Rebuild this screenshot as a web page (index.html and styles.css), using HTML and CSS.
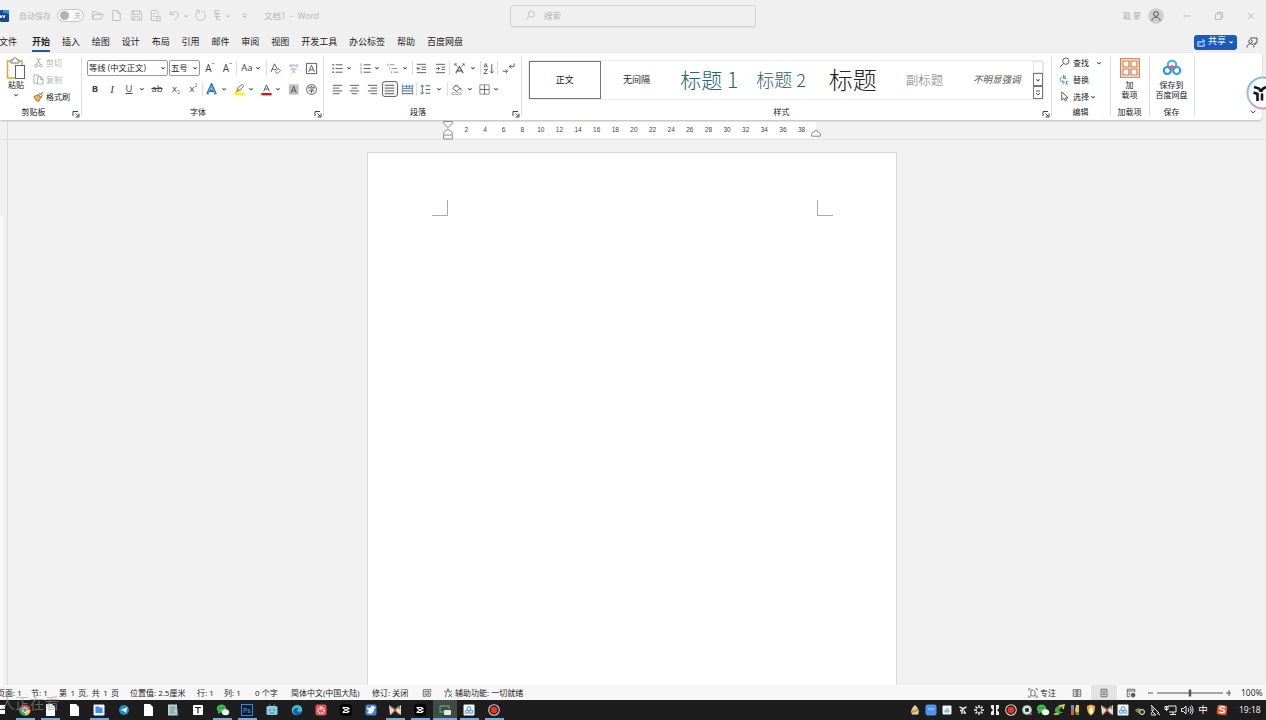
FILE: index.html
```html
<!DOCTYPE html>
<html lang="zh-CN">
<head>
    <meta charset="UTF-8">
    <title>文档1 - Word</title>
    <link rel="stylesheet" href="styles.css">
</head>
<body>
<svg class="defs">
    <symbol id="caret" viewBox="0 0 6 6"><path d="M1.300 2.300L3 3.800l1.700-1.500" fill="none" stroke="currentColor" stroke-width="1.1"/></symbol>
    <symbol id="launcher" viewBox="0 0 8 8"><path d="M1 6V1.500h5M3.500 3.500l3 3M7 3.500V7H3.500" fill="none" stroke="#444" stroke-width="1"/></symbol>
    <symbol id="doc" viewBox="0 0 16 16"><path d="M4 2h6l3 3v9H4z" fill="#fff"/></symbol>
    <symbol id="capcut" viewBox="0 0 16 16"><rect x="2" y="2" width="12" height="12" rx="3" fill="#000"/><path d="M4.500 5.500h5l2 1.500M4.500 10.500h5l2-1.500M5 6l6 4M5 10l6-4" fill="none" stroke="#fff" stroke-width="1.200"/></symbol>
    <symbol id="butterfly" viewBox="0 0 16 16"><path d="M2 3l6 4 6-4v10l-6-4-5 4z" fill="#e8dccb"/><path d="M3 4l5 4-4 5M13 4L8 8l4 5" fill="none" stroke="#a64b42" stroke-width="1"/><path d="M11 4l2 3" stroke="#55a05a" stroke-width="1.500"/></symbol>
    <symbol id="wechat" viewBox="0 0 16 16"><ellipse cx="6.500" cy="6.500" rx="4.700" ry="4" fill="#3fb954"/><path d="M3 9l0 3 3-2z" fill="#3fb954"/><ellipse cx="10.500" cy="10.300" rx="3.700" ry="3" fill="#f1f5f1"/><circle cx="5" cy="6" r=".7" fill="#185425"/><circle cx="8" cy="6" r=".7" fill="#185425"/></symbol>
    <symbol id="netdisk" viewBox="0 0 16 16"><rect x="2.500" y="2.500" width="11" height="11" rx="1" fill="#f2f7fd"/><g fill="none" stroke="#6aa9da" stroke-width="1.200"><circle cx="8" cy="6.700" r="1.800"/><circle cx="5.900" cy="9.700" r="1.600"/><circle cx="10.100" cy="9.700" r="1.600"/></g></symbol>
    <symbol id="rec" viewBox="0 0 16 16"><circle cx="8" cy="8" r="5.300" fill="#222" stroke="#d9d0ca" stroke-width="1.100"/><circle cx="8" cy="8" r="3.300" fill="#ee3328"/></symbol>
    <symbol id="knot" viewBox="0 0 16 16"><path d="M4 3h3v10H4v-3l2-2-2-2zM12 3H9v10h3v-3l-2-2 2-2z" fill="currentColor"/></symbol>
</svg>

<header class="titlebar">
    <svg class="word-logo" viewBox="0 0 9 12"><rect width="9" height="12" rx="1" fill="#174a9a"/><path d="M3 0h6v4H3z" fill="#3a8fdc"/><rect y="3" width="7" height="7" fill="#164491"/><path d="M0 5l1 3 1.500-3L4 8l1-3" fill="none" stroke="#fff"/></svg>
    <span class="autosave">自动保存</span>
    <span class="toggle"><i></i><b>关</b></span>
    <div class="quick">
        <svg viewBox="0 0 14 14"><path d="M1.500 11V3h4l1 1.500h4V6M1.500 11l2-5H13l-2 5z"/></svg>
        <svg viewBox="0 0 14 14"><path d="M3 1.500h5l3 3v8H3zM8 1.500v3h3"/></svg>
        <svg viewBox="0 0 14 14"><path d="M2 2h9l1.500 1.500V12H2zM4 2v4h6V2M4 12V8.500h6V12"/></svg>
        <svg viewBox="0 0 14 14"><path d="M7 12.500H2.500v-11h5l2.500 3V6M4 5h3M4 8h3M8 8h4v5H8zM9 10h2"/></svg>
        <svg viewBox="0 0 14 14"><path d="M2.500 2v4h4M2.500 6C5 2 11 2 11 6.500c0 2-2 4-4.500 5.500"/></svg>
        <svg class="caret"><use href="#caret"/></svg>
        <svg viewBox="0 0 14 14"><path d="M2 1.500h3.500V5M5 2C1 4 1 10 5 12c4 1.500 8-2 7-6-.5-2-2-3.500-4-4"/></svg>
        <svg viewBox="0 0 14 14"><path d="M3 2h6M5 2v3h5M8 5l-4 3h6M5 8l5 5M6 8v4M3 5h3"/></svg>
        <svg class="caret"><use href="#caret"/></svg>
        <svg viewBox="0 0 14 14"><path d="M4.500 5.500h5M5.500 8L7 9.500 8.500 8z"/></svg>
    </div>
    <span class="doc-title">文档1&nbsp; -&nbsp; Word</span>
    <div class="search">
        <svg viewBox="0 0 12 12"><circle cx="7" cy="4.500" r="3.300"/><path d="M4.500 7L1 10.500"/></svg>
        <span>搜索</span>
    </div>
    <span class="user">戢 蓼</span>
    <svg class="avatar" viewBox="0 0 16 16"><circle class="disc" cx="8" cy="8" r="7.800"/><circle cx="8" cy="6" r="2.400"/><path d="M3.800 13c.5-5 7.900-5 8.400 0"/></svg>
    <div class="window-buttons">
        <svg viewBox="0 0 12 12"><path d="M2.500 6h7"/></svg>
        <svg viewBox="0 0 12 12"><path d="M2.500 4h5.500v5.500H2.500zM4.500 4V2.500h5V8H8"/></svg>
        <svg viewBox="0 0 12 12"><path d="M3 3l6 6M9 3L3 9"/></svg>
    </div>
</header>

<nav class="tabs">
    <span>文件</span><span class="active">开始</span><span>插入</span><span>绘图</span><span>设计</span><span>布局</span><span>引用</span><span>邮件</span><span>审阅</span><span>视图</span><span>开发工具</span><span>办公标签</span><span>帮助</span><span>百度网盘</span>
    <div class="share">
        <svg viewBox="0 0 10 10"><path d="M3 4H1v5h7V6M3 6.500C3 4 5 3.500 8 3.500M6 1.500l2.500 2L6 5.500"/></svg>
        <span>共享</span>
        <svg class="caret"><use href="#caret"/></svg>
    </div>
    <svg class="comment" viewBox="0 0 12 12"><path d="M4 2h7v5H9v2L7.500 7.500"/><circle cx="4.500" cy="5.500" r="1.800"/><path d="M1 11.500c0-5 7-5 7 0"/></svg>
</nav>

<section class="ribbon">
    <div class="group clipboard">
        <div class="body">
            <div class="paste">
                <svg viewBox="0 0 20 24"><path d="M5 4H1.500v17H9M12 4h4v4" fill="none" stroke="#dfa339" stroke-width="1.500"/><path d="M5 6V3h2c0-3 4-3 4 0h2v3z" fill="#fff" stroke="#777"/><path d="M9.500 8.500h9v13h-9z" fill="#fff" stroke="#666" stroke-width="1.100"/></svg>
                <span>粘贴</span>
                <svg class="caret"><use href="#caret"/></svg>
            </div>
            <div class="stack">
                <div class="off"><svg viewBox="0 0 12 12"><path d="M4 1l4 7M8 1L4 8"/><circle cx="3.500" cy="9.500" r="1.500"/><circle cx="8.500" cy="9.500" r="1.500"/></svg>剪切</div>
                <div class="off"><svg viewBox="0 0 12 12"><path d="M5 10H1V1h5v2M5 3h3.500L11 5.500V11H5zM8 3v3h3"/></svg>复制</div>
                <div><svg viewBox="0 0 12 12"><path d="M1 6l5-2 2.500 3L6 11.500C4 11 2 9 1 6z" fill="#efb55b" stroke="#b5711b"/><path d="M6 4l1.500-1.500L10 5 8.500 7zM9 3.500l2-2.500" fill="#fff" stroke="#555"/></svg>格式刷</div>
            </div>
        </div>
        <div class="label"><span>剪贴板</span><svg><use href="#launcher"/></svg></div>
    </div>

    <div class="group font">
        <div class="row font-top">
            <div class="combo"><span>等线 (中文正文)</span><svg class="caret"><use href="#caret"/></svg></div>
            <div class="combo"><span>五号</span><svg class="caret"><use href="#caret"/></svg></div>
            <div class="cell grow">A<sup>ˆ</sup></div>
            <div class="cell grow">A<sup>ˇ</sup></div>
            <div class="cell sep">Aa<svg class="caret"><use href="#caret"/></svg></div>
            <div class="cell sep"><svg viewBox="0 0 14 14"><path d="M2 11L6 2l3 6M3.500 8h4"/><path d="M7 10l3-3 2.500 2-3 3H8z" stroke="#b05b9f"/></svg></div>
            <div class="cell"><svg viewBox="0 0 14 14"><path d="M3 3h2v2H3zM6 5V3h2v2M9.500 3h2v2h-2z" stroke="#8a9fb3" stroke-width=".7"/><path d="M3.500 7.500h7M7 6.500v1M5 8l4 4M9 8l-4 4" stroke="#999" stroke-width=".8"/></svg></div>
            <div class="cell"><svg viewBox="0 0 14 14"><path d="M1.500 1.500h11v11h-11zM4 10.500L7 3.500l3 7M5 8.500h4"/></svg></div>
        </div>
        <div class="row font-bottom">
            <div class="cell"><b>B</b></div>
            <div class="cell serif"><i>I</i></div>
            <div class="cell"><u>U</u></div>
            <div class="cell drop pad"><svg class="caret"><use href="#caret"/></svg></div>
            <div class="cell"><s>ab</s></div>
            <div class="cell script">x<sub>2</sub></div>
            <div class="cell script">x<sup>2</sup></div>
            <div class="cell sep"><svg viewBox="0 0 14 14"><path d="M2.500 12L7 2l4.500 10M4.500 8.500h5" stroke="#2472b5" stroke-width="2.600"/><path d="M3 12L7 3l4 9" stroke="#a9d4f2" stroke-width=".7"/></svg></div>
            <div class="cell drop"><svg class="caret"><use href="#caret"/></svg></div>
            <div class="cell"><svg viewBox="0 0 14 14"><path d="M1.500 11.700h11" stroke="#fbef1c" stroke-width="2.700"/><path d="M4 9l1.500-4L10 1.500 11.500 3 8 7.500z" fill="#fff" stroke="#666"/><path d="M3 10l3-4 1.500 2z" stroke="#d0a21d"/></svg></div>
            <div class="cell drop"><svg class="caret"><use href="#caret"/></svg></div>
            <div class="cell"><svg viewBox="0 0 14 14"><path d="M1.500 12h11" stroke="#d0151e" stroke-width="2.600"/><path d="M4 9l3-7 3 7M5 6.500h4"/></svg></div>
            <div class="cell drop"><svg class="caret"><use href="#caret"/></svg></div>
            <div class="cell"><svg viewBox="0 0 14 14"><path d="M2 1.500h10.500v11H2z" fill="#bfbfbf" stroke="none"/><path d="M4.500 10.500l2.700-7 2.700 7M5.500 8.300h3.500"/></svg></div>
            <div class="cell"><svg viewBox="0 0 14 14"><circle cx="7" cy="7" r="5.300"/><path d="M7 3v1M4 6V4.500h6V6M5 6.500h4L7 8M4 8.500h6M7 8v3"/></svg></div>
        </div>
        <div class="label"><span>字体</span><svg><use href="#launcher"/></svg></div>
    </div>

    <div class="group para">
        <div class="row para-top">
            <div class="cell"><svg viewBox="0 0 14 14"><path d="M5 3h7.500M5 7h7.500M5 11h7.500"/><path d="M1.500 3h1.700M1.500 7h1.700M1.500 11h1.700" stroke="#2f6fa8" stroke-width="1.700"/></svg></div>
            <div class="cell drop"><svg class="caret"><use href="#caret"/></svg></div>
            <div class="cell"><svg viewBox="0 0 14 14"><path d="M5 3h7.500M5 7h7.500M5 11h7.500"/><path d="M2 1.500v3M1.500 6h1v2h-1M1.500 10h1v2h-1" stroke="#669ac5" stroke-width=".8"/></svg></div>
            <div class="cell drop"><svg class="caret"><use href="#caret"/></svg></div>
            <div class="cell"><svg viewBox="0 0 14 14"><path d="M4 3h5M6 7h6M8 11h5" stroke="#888"/><path d="M2 2v2M4 6v2M6 10v2" stroke="#669ac5"/></svg></div>
            <div class="cell drop"><svg class="caret"><use href="#caret"/></svg></div>
            <div class="cell sep"><svg viewBox="0 0 14 14"><path d="M2 2.500h10M7 5.500h5M7 8h5M2 11.500h10"/><path d="M6 7H2m2-2L2 7l2 2" stroke="#3276b0"/></svg></div>
            <div class="cell"><svg viewBox="0 0 14 14"><path d="M2 2.500h10M8 5.500h4M8 8h4M2 11.500h10"/><path d="M2 7h4M4 5l2 2-2 2" stroke="#3276b0"/></svg></div>
            <div class="cell sep"><svg viewBox="0 0 14 14"><path d="M3 12l4-7 4 7M5 9.500h4" stroke-width="1.200"/><path d="M2 2l3 3M12 2L9 5M2 4V2h2M12 4V2h-2" stroke="#3d78a6"/></svg></div>
            <div class="cell drop"><svg class="caret"><use href="#caret"/></svg></div>
            <div class="cell sep"><svg viewBox="0 0 14 14"><path d="M2 6l2-4.500L6 6M3 4.500h2" stroke="#2f6fa8"/><path d="M2 8h4l-4 4.500h4M10.500 2v10M8.500 10l2 2 2-2"/></svg></div>
            <div class="cell sep"><svg viewBox="0 0 14 14"><path d="M13 1.500V5H8m2-2L8 5l2 2M1 10h5M4 8l2 2-2 2"/></svg></div>
        </div>
        <div class="row para-bottom">
            <div class="cell"><svg viewBox="0 0 14 14"><path d="M2 2.500h10M2 5.500h7M2 8.500h10M2 11.500h7"/></svg></div>
            <div class="cell"><svg viewBox="0 0 14 14"><path d="M2 2.500h10M4 5.500h6M2 8.500h10M4 11.500h6"/></svg></div>
            <div class="cell"><svg viewBox="0 0 14 14"><path d="M2 2.500h10M5 5.500h7M2 8.500h10M5 11.500h7"/></svg></div>
            <div class="cell"><div class="pressed"><svg viewBox="0 0 14 14"><path d="M2 2.500h10M2 5.500h10M2 8.500h10M2 11.500h10"/></svg></div></div>
            <div class="cell"><svg viewBox="0 0 14 14"><path d="M2 8.500h10M2 11.500h10"/><path d="M1.500 1.500v11M12.500 1.500v11M2 3.500h10M2 6h10M6 2v4M9 2v4" stroke="#4b82b5"/></svg></div>
            <div class="cell sep"><svg viewBox="0 0 14 14"><path d="M7 3h5M7 7h5M7 11h5"/><path d="M3.500 2v10M2 4l1.500-2L5 4M2 10l1.500 2L5 10" stroke="#2f6fa8"/></svg></div>
            <div class="cell drop"><svg class="caret"><use href="#caret"/></svg></div>
            <div class="cell sep"><svg viewBox="0 0 14 14"><path d="M2 10.500h10v2H2z" stroke="#aaa"/><path d="M3 6l4-4 3.500 4L7 9zM5 2l2 2M11 5l1 3"/></svg></div>
            <div class="cell drop"><svg class="caret"><use href="#caret"/></svg></div>
            <div class="cell"><svg viewBox="0 0 14 14"><path d="M2 2h10v10H2z" stroke="#888"/><path d="M7 2v10M2 7h10" stroke="#666"/></svg></div>
            <div class="cell drop"><svg class="caret"><use href="#caret"/></svg></div>
        </div>
        <div class="label"><span>段落</span><svg><use href="#launcher"/></svg></div>
    </div>

    <div class="group styles">
        <div class="gallery">
            <div class="style selected">正文</div>
            <div class="style">无间隔</div>
            <div class="style h1">标题 1</div>
            <div class="style h2">标题 2</div>
            <div class="style title">标题</div>
            <div class="style subtitle">副标题</div>
            <div class="style subtle">不明显强调</div>
            <div class="scroll">
                <span></span>
                <span><svg class="caret"><use href="#caret"/></svg></span>
                <span><svg class="caret" viewBox="0 0 6 6"><path d="M1 1h4M1 3l2 2 2-2" fill="none" stroke="currentColor"/></svg></span>
            </div>
        </div>
        <div class="label"><span>样式</span><svg><use href="#launcher"/></svg></div>
    </div>

    <div class="group editing">
        <div class="stack">
            <div><svg viewBox="0 0 12 12"><circle cx="7.500" cy="4.500" r="3.500"/><path d="M5 7l-4 4"/></svg>查找<svg class="caret far"><use href="#caret"/></svg></div>
            <div><svg viewBox="0 0 12 12"><path d="M5 1v4h2V3H5M10 8H8v3h2M3 3C0 6 1 9 5 9M3.500 7L6 9l-2 2" stroke="#3f83b9"/></svg>替换</div>
            <div><svg viewBox="0 0 12 12"><path d="M3 1v9l2.500-2 1.500 3 1.500-1-1.500-2.500H10z"/></svg>选择<svg class="caret"><use href="#caret"/></svg></div>
        </div>
        <div class="label"><span>编辑</span></div>
    </div>

    <div class="group addins">
        <div class="big">
            <svg viewBox="0 0 20 20"><path d="M.7.700h18.600v18.600H.7zM3 3h6v6H3zM11 3h6v6h-6zM3 11h6v6H3zM11 11h6v6h-6z" fill="none" stroke="#ce6b2f" stroke-width="1.100"/></svg>
            <span>加</span><span>载项</span>
        </div>
        <div class="label"><span>加载项</span></div>
    </div>

    <div class="group netdisk">
        <div class="big">
            <svg viewBox="0 0 20 20"><g fill="none" stroke-width="2.200"><circle cx="10" cy="6.800" r="4.200" stroke="#45b7e5"/><circle cx="5.300" cy="12.500" r="3.500" stroke="#2c91df"/><circle cx="14.700" cy="12.500" r="3.500" stroke="#2fa0dd"/><path d="M7.300 10l2.700-2 2.700 2" stroke="#ed5266"/></g></svg>
            <span>保存到</span><span>百度网盘</span>
        </div>
        <div class="label"><span>保存</span></div>
    </div>
    <svg class="collapse" viewBox="0 0 8 6"><path d="M1.500 1.500L4 4l2.500-2.500"/></svg>
</section>

<svg class="assistant" viewBox="0 0 20 34">
    <defs><linearGradient id="ring" x1="0" y1="0" x2=".5" y2="1"><stop offset="0" stop-color="#79bde8"/><stop offset=".6" stop-color="#a8bce8"/><stop offset="1" stop-color="#ee93a8"/></linearGradient></defs>
    <circle cx="17" cy="17" r="15.500" fill="#fff" stroke="url(#ring)" stroke-width="2.200"/>
    <path d="M8 11l5 1.500 2 3M20 11l-3.500 2-1.500 3M7.500 16.500l4 1.500v7M16 17.500v7" fill="none" stroke="#15191f" stroke-width="2.600"/>
</svg>

<main class="workspace">
    <div class="ruler">
        <svg class="indent-left" viewBox="0 0 10 20"><path d="M.7 1.500h8.600v2L5 7.500.7 3.500zM.7 19v-4h8.600v4zM.7 14.500v-2L5 9l4.300 3.500v2"/></svg>
        <div class="numbers">
            <span>2</span><span>4</span><span>6</span><span>8</span><span>10</span><span>12</span><span>14</span><span>16</span><span>18</span><span>20</span><span>22</span><span>24</span><span>26</span><span>28</span><span>30</span><span>32</span><span>34</span><span>36</span><span>38</span>
        </div>
        <svg class="indent-right" viewBox="0 0 10 8"><path d="M.7 7.200V4.500L5 1l4.300 3.500v2.700z"/></svg>
    </div>
    <div class="canvas">
        <div class="strip"></div>
        <div class="page">
            <i class="crop left"></i>
            <i class="crop right"></i>
        </div>
    </div>
</main>

<footer class="statusbar">
    <span>页面: 1</span>
    <span>节: 1</span>
    <span class="pages">第 1 页, 共 1 页</span>
    <span>位置值: 2.5厘米</span>
    <span>行: 1</span>
    <span>列: 1</span>
    <span>0 个字</span>
    <span>简体中文(中国大陆)</span>
    <span>修订: 关闭</span>
    <span><svg viewBox="0 0 12 12"><path d="M1.500 2h9v3M1.500 2v8H5M3 4h6M3 6h2M3 8h2"/><circle cx="8" cy="8" r="2.500"/><circle cx="8" cy="8" r=".6"/></svg></span>
    <span><svg viewBox="0 0 12 12"><circle cx="6" cy="2.300" r="1.200"/><path d="M2 3C1 5 4 4 4 6l-1 5M10 3c1 2-2 1-2 3M4 4h4M6 11l5-4M7 7l4 4"/></svg>辅助功能: 一切就绪</span>
    <span><svg viewBox="0 0 12 12"><path d="M1 3V1h2M1 9v2h2M9 1h2v2M11 9v2H9M3.500 2.500h3l2 2v5h-5z"/></svg>专注</span>
    <span><svg viewBox="0 0 12 12"><path d="M1.500 2H6v8H1.500zM6 2h4.500v8H6zM3 4h1.500M3 6h1.500M3 8h1.500M7.500 4H9M7.500 6H9M7.500 8H9"/></svg></span>
    <span class="view-on"><svg viewBox="0 0 12 12"><path d="M2.500 1.500h7v9h-7zM4 4h4M4 6h4M4 8h4"/></svg></span>
    <span><svg viewBox="0 0 12 12"><path d="M5 10.500H1.500v-9h9V5M1.500 3.500h9M3 6h2M3 8h2"/><circle cx="8.500" cy="8.500" r="2.300" fill="#555"/></svg></span>
    <div class="zoom"><svg viewBox="0 0 84 12"><path d="M1 6h5M10 6h66M79 6h6M82 3v6"/><path d="M43 2.500v7" stroke="#555" stroke-width="2.500"/></svg></div>
    <span>100%</span>
</footer>

<footer class="taskbar">
    <div class="start"><svg viewBox="0 0 16 16"><path d="M0 3h5v4H0zM0 8h5v4H0z" fill="#fff"/></svg></div>
    <div class="apps">
        <div class="open"><svg viewBox="0 0 16 16"><circle cx="8" cy="8" r="5.500" fill="#e24a3b"/><path d="M8 8L3 5a5.500 5.500 0 0 0 5 8.500z" fill="#42a555"/><path d="M8 8h5.500A5.500 5.500 0 0 1 8 13.500z" fill="#f5c83c"/><circle cx="8" cy="8" r="2.400" fill="#4486e8" stroke="#fff"/></svg></div>
        <div class="open"><svg><use href="#doc"/></svg></div>
        <div><svg><use href="#doc"/></svg></div>
        <div class="open"><svg viewBox="0 0 16 16"><rect x="2.500" y="2.500" width="11" height="11" rx="1" fill="#eef6ff"/><path d="M4.500 4.500h3l1 1h3v5.500h-7z" fill="#3b8ff0"/></svg></div>
        <div><svg viewBox="0 0 16 16"><circle cx="8" cy="8" r="5" fill="#2489c5"/><path d="M4.500 8l7-3-1.500 6-2.500-2z" fill="#d8f1ff"/></svg></div>
        <div><svg><use href="#doc"/></svg></div>
        <div><svg viewBox="0 0 16 16"><path d="M3 2.500h9v11H3z" fill="#bcd4da"/><path d="M4.500 5h6M4.500 7h6M4.500 9h5M4.500 11h6M12 6l1 8" stroke="#668d99"/></svg></div>
        <div><svg viewBox="0 0 16 16"><rect x="3" y="3" width="10" height="10" rx="1" fill="#fff"/><path d="M5 5.500h6M8 5.500v6" stroke="#222" stroke-width="1.200"/></svg></div>
        <div class="open"><svg><use href="#wechat"/></svg></div>
        <div class="open"><svg viewBox="0 0 16 16"><rect x="2.500" y="2.500" width="11" height="11" fill="#071d31" stroke="#3a89c4"/><text x="4" y="11" font-size="7" fill="#54a9e5">Ps</text></svg></div>
        <div><svg viewBox="0 0 16 16"><rect x="2.500" y="4" width="11" height="9" rx="1.500" fill="#8ccce1"/><path d="M5 2l2 2M11 2L9 4M5 8h2M9 8h2M6 11h4" stroke="#397f98"/></svg></div>
        <div><svg viewBox="0 0 16 16"><circle cx="8" cy="8" r="5.300" fill="#1777c7"/><path d="M3 7c2-5 9-5 10 0 1 4-5 3-5 1-3 0-2 4 1 5-4 1-7-3-6-6z" fill="#45c6c7"/><path d="M4 9c1-4 5-4 6-2-4 0-2 5 2 4-2 3-7 3-8-2z" fill="#185ea9"/></svg></div>
        <div><svg viewBox="0 0 16 16"><rect x="2.500" y="2.500" width="11" height="11" rx="2" fill="#e65359"/><circle cx="8" cy="8.500" r="3" fill="none" stroke="#ffd6d4" stroke-width="1.200"/><path d="M8 4v4" stroke="#fff"/></svg></div>
        <div><svg><use href="#capcut"/></svg></div>
        <div><svg viewBox="0 0 16 16"><rect x="2.500" y="2.500" width="11" height="11" rx="2" fill="#4481d7"/><path d="M4 5c2 2 3 1 4 0 1-2 3-1 3 0l2 0-2 2c0 5-5 6-7 3 2 0 2-1 2-1-2-1-2-3-2-4z" fill="#fff"/></svg></div>
        <div class="open"><svg><use href="#butterfly"/></svg></div>
        <div class="open"><svg><use href="#capcut"/></svg></div>
        <div class="open current"><svg viewBox="0 0 16 16"><path d="M3 4h9v3M3 4v6h4" fill="none" stroke="#509d75" stroke-width="1.300"/><rect x="7" y="8" width="7" height="5" rx="1" fill="#dcefe1"/></svg></div>
        <div class="open"><svg><use href="#netdisk"/></svg></div>
        <div class="open"><svg><use href="#rec"/></svg></div>
    </div>
    <div class="tray">
        <svg viewBox="0 0 16 16"><path d="M8 3l2 2 2 4-1 4H5L4 9l2-4z" fill="#ded1a6"/><path d="M4.500 10l7-2" stroke="#d98b24" stroke-width="2"/><path d="M5 12.500h6" stroke="#599"/></svg>
        <svg viewBox="0 0 16 16"><rect x="2.500" y="2.500" width="11" height="11" rx="2" fill="#4d94ed"/><path d="M5 7h6" stroke="#85bafa" stroke-width="2"/></svg>
        <svg viewBox="0 0 16 16"><rect x="3.500" y="3.500" width="9" height="9" rx="1" fill="#f2f7fd"/><path d="M5.500 10.500c-1-3 1-2 2-4 2-1 2 1 3 2 1 3-3 2-5 2z" fill="#8dbde3"/></svg>
        <svg viewBox="0 0 16 16"><path d="M4.500 5L7 6l1 1.500L9 6l2.500-1M5 8.500h2V12M9.300 8.500V11H11" fill="none" stroke="#eee" stroke-width="1.400"/></svg>
        <svg viewBox="0 0 16 16"><path d="M8 3v3M8 10v3M3 8h3M10 8h3M4.500 4.500l2 2M9.500 9.500l2 2M11.500 4.500l-2 2M6.500 9.500l-2 2" stroke="#eee" stroke-width="1.500"/></svg>
        <svg class="light"><use href="#knot"/></svg>
        <svg><use href="#rec"/></svg>
        <svg viewBox="0 0 16 16"><circle cx="8" cy="8" r="4.800" fill="#bfd6d3"/><circle cx="8" cy="8" r="2.800" fill="#253a3d" stroke="#fff"/><path d="M10 12h3" stroke="#d6653b" stroke-width="1.500"/></svg>
        <svg><use href="#wechat"/></svg>
        <svg viewBox="0 0 16 16"><path d="M13 5C8 1 3 6 4 9c1 4 6 3 8 1-4 0-5-2-2-4z" fill="#48a444"/><path d="M8 4l5-1-1 4M3 12h5" fill="none" stroke="#ead55c" stroke-width="1.500"/></svg>
        <svg viewBox="0 0 16 16"><path d="M4 3h3v10H4z" fill="#e25743"/><path d="M12 3H9L8 8l1 5h3z" fill="#f1c33e"/><path d="M4 3h3v4H4z" fill="#4ba0dd"/><path d="M9 10h3v3H9z" fill="#4ba45a"/></svg>
        <svg viewBox="0 0 16 16"><path d="M4 4l4-1.500L12 4c0 5-1 7.500-4 9.500C5 11.500 4 9 4 4z" fill="#f5ae32"/><path d="M8 4c3 4 3 7 0 8-3-2-2-4 0-8z" fill="#fff4ca"/></svg>
        <svg><use href="#butterfly"/></svg>
        <svg><use href="#netdisk"/></svg>
        <svg viewBox="0 0 16 16"><path d="M4 8c3-3 6-2 8 1-2 3-6 3-8-1z" fill="#6a913c"/><circle cx="11" cy="10" r="2.500" fill="#333" stroke="#eee"/></svg>
        <svg class="line" viewBox="0 0 16 16"><path d="M4 3l8 8M5 4v5l4 4H4M10 11l3 2M7 7l-3 5"/></svg>
        <svg class="line" viewBox="0 0 16 16"><path d="M5 4h8v6H6M10 10v3M7 12.500h6M3.500 4v5M2 4.500h3v3H2z"/></svg>
        <svg class="line" viewBox="0 0 16 16"><path d="M2.500 6.500h2l2.500-2.500v8L4.500 9.500h-2zM9 6c1 1 1 3 0 4M11 4.500c1.500 2 1.500 5 0 7M12.500 3.500c2 3 2 6 0 9"/></svg>
        <span>中</span>
        <svg class="sogou" viewBox="0 0 16 16"><rect x="3" y="3" width="10" height="10" rx="2.500" fill="#ec5528" transform="rotate(8 8 8)"/><path d="M11 5.500C8 4 5.500 4.500 5.500 6s5 1 5 3-3 2-5.500 1" fill="none" stroke="#fff" stroke-width="1.500"/></svg>
    </div>
    <span class="clock">19:18</span>
</footer>
<div class="viewers">人正在看</div>
</body>
</html>
```
FILE: styles.css
```css
* {
    box-sizing: border-box;
}
body {
    margin: 0;
    width: 1266px;
    height: 720px;
    overflow: hidden;
    background: #f1f1f1;
    color: #222;
    font-family: "Open Sans", "Noto Sans CJK SC", sans-serif;
    font-size: 8px;
    line-height: 10px;
    display: flex;
    flex-direction: column;
    position: relative;
    white-space: nowrap;
}
svg {
    display: block;
    flex: none;
}
.defs {
    position: absolute;
    width: 0;
    height: 0;
}
.caret {
    width: 6px;
    height: 6px;
    color: #555;
}

/* title bar */
.titlebar {
    height: 31px;
    flex: none;
    display: flex;
    align-items: center;
    background: #f0f0f0;
    color: #b4b4b4;
}
.titlebar svg {
    fill: none;
    stroke: #bdbdbd;
}
.titlebar .caret {
    color: #bbb;
    stroke: none;
}
.titlebar .word-logo {
    width: 9px;
    height: 12px;
    stroke: none;
}
.autosave {
    margin-left: 10px;
    width: 38px;
}
.toggle {
    width: 27px;
    height: 13px;
    border: 1px solid #c6c6c6;
    border-radius: 7px;
    background: #fafafa;
    display: flex;
    align-items: center;
    padding-left: 2px;
    gap: 5px;
}
.toggle i {
    width: 9px;
    height: 9px;
    border-radius: 50%;
    background: #b2b2b2;
}
.toggle b {
    font-size: 7px;
    font-weight: normal;
}
.quick {
    margin-left: 3px;
    width: 177px;
    display: grid;
    grid-template-columns: 20px 19px 20px 18px 20px 3px 26px 8px 14px 18px;
    align-items: center;
    justify-items: center;
}
.quick svg:not(.caret) {
    width: 13px;
    height: 13px;
}
.doc-title {
    width: 246px;
    font-size: 8.5px;
}
.search {
    width: 246px;
    height: 22px;
    border: 1px solid #d4d4d4;
    border-radius: 3px;
    box-shadow: 0 1px 1px #ddd;
    display: flex;
    align-items: center;
    padding-left: 14px;
    gap: 8px;
    font-size: 8.5px;
}
.search svg {
    width: 11px;
    height: 11px;
}
.user {
    margin-left: 367px;
    width: 25px;
}
.titlebar .avatar {
    width: 16px;
    height: 16px;
    stroke: #555;
}
.avatar .disc {
    fill: #cecece;
    stroke: none;
}
.window-buttons {
    margin-left: 17px;
    display: flex;
    gap: 20px;
}
.window-buttons svg {
    width: 12px;
    height: 12px;
}

/* tabs */
.tabs {
    height: 22px;
    flex: none;
    display: flex;
    align-items: center;
    background: #f0f0f0;
    font-size: 9px;
}
.tabs > span {
    height: 19px;
    line-height: 18px;
    margin-right: 11.9px;
}
.tabs > span:first-child {
    margin-left: -1px;
    margin-right: 15px;
}
.tabs .active {
    font-weight: bold;
    border-bottom: 2px solid #2b579a;
}
.share {
    margin-left: auto;
    width: 43px;
    height: 15px;
    border-radius: 3px;
    background: #185abd;
    color: #fff;
    display: flex;
    align-items: center;
    justify-content: center;
    gap: 2px;
}
.share span {
    margin-top: -2px;
}
.share svg:first-child {
    width: 9px;
    height: 9px;
    fill: none;
    stroke: #fff;
}
.share .caret {
    color: #fff;
}
.comment {
    width: 12px;
    height: 12px;
    margin: 0 8px 0 9px;
    fill: none;
    stroke: #555;
}

/* ribbon */
.ribbon {
    height: 67px;
    width: 1262px;
    flex: none;
    display: flex;
    background: #fff;
    border-radius: 0 4px 4px 0;
    box-shadow: 0 1px 2px #bbb;
    position: relative;
}
.group {
    height: 67px;
    padding-top: 7px;
    flex: none;
    display: flex;
    flex-direction: column;
    background: linear-gradient(#dedede, #dedede) right 4px / 1px 59px no-repeat;
}
.label {
    height: 16px;
    margin-top: auto;
    display: grid;
    grid-template-columns: 1fr 10px;
    align-items: center;
    text-align: center;
}
.label span {
    margin-top: -1px;
}
.label svg {
    width: 8px;
    height: 8px;
    margin-top: 3px;
}
.row {
    height: 16px;
    margin-bottom: 5px;
    display: grid;
    align-items: center;
}
.cell {
    height: 16px;
    display: flex;
    align-items: center;
    justify-content: center;
    font-size: 10px;
    line-height: 16px;
    color: #444;
}
.cell svg:not(.caret) {
    width: 13px;
    height: 13px;
    fill: none;
    stroke: #555;
}
.cell.sep {
    background: linear-gradient(#ddd, #ddd) left center / 1px 14px no-repeat;
}
.cell.drop {
    justify-content: flex-start;
    padding-left: 1px;
}
.cell.pad {
    padding-left: 2px;
}
.stack > div {
    height: 17px;
    display: flex;
    align-items: center;
}
.stack svg:first-child {
    width: 11px;
    height: 11px;
    margin-right: 3px;
    fill: none;
    stroke: #555;
}
.clipboard {
    width: 82px;
}
.clipboard .body {
    display: flex;
    margin-top: -6px;
}
.clipboard .label span {
    padding-right: 5px;
}
.clipboard .stack svg:first-child {
    margin-left: 1px;
    margin-right: 2px;
}
.paste {
    width: 32px;
    padding-top: 3px;
    display: flex;
    flex-direction: column;
    align-items: center;
}
.paste svg:first-child {
    width: 20px;
    height: 24px;
}
.paste span {
    margin-top: -1px;
}
.paste .caret {
    margin-top: 2px;
}
.stack .off {
    color: #b5b5b5;
}
.stack .off svg {
    stroke: #aaa;
}
.font {
    width: 242px;
    padding-left: 5px;
}
.font .label {
    margin-left: -5px;
}
.font-top {
    grid-template-columns: 82px 32px 18px 17px 30px 19px 17px 18px;
}
.font-bottom {
    grid-template-columns: 16px 18px 16px 10px 20px 18px 17px 18px 11px 16px 11px 16px 11px 17px 18px;
}
.combo {
    height: 16px;
    margin-right: 1px;
    padding: 0 1px;
    border: 1px solid #999;
    border-radius: 2px;
    display: flex;
    align-items: center;
    justify-content: space-between;
    font-size: 8.3px;
}
.grow sup {
    font-size: 8px;
    line-height: 8px;
    margin-bottom: 6px;
}
.font-top .cell.sep {
    font-size: 9.5px;
    gap: 2px;
}
.font-bottom .cell {
    font-size: 9.5px;
}
.font-bottom .serif {
    font-family: "Liberation Serif", serif;
    font-size: 11px;
}
.script sub,
.script sup {
    font-size: 5px;
    line-height: 5px;
    color: #2f6fa8;
}
.script sub {
    margin-top: 7px;
}
.script sup {
    margin-bottom: 7px;
}
.para {
    width: 198px;
    padding-left: 5px;
}
.para .label {
    margin-left: -5px;
}
.para-top {
    grid-template-columns: 16px 12px 16px 11px 17px 11px 19px 18px 20px 11px 17px 23px;
}
.para-bottom {
    grid-template-columns: 17px 17px 18px 17px 18px 19px 12px 19px 11px 15px 10px;
}
.pressed {
    width: 16px;
    height: 16px;
    flex: none;
    border: 1px solid #666;
    border-radius: 3px;
    display: flex;
    align-items: center;
    justify-content: center;
    background: #f5f5f5;
}
.styles {
    width: 530px;
    padding-left: 6px;
}
.styles .label {
    margin-left: -7px;
}
.gallery {
    width: 516px;
    height: 40px;
    display: flex;
    border: 1px solid #e8e8e8;
    border-radius: 3px;
}
.style {
    width: 72px;
    height: 38px;
    display: flex;
    align-items: center;
    justify-content: center;
    font-size: 9px;
    line-height: 30px;
}
.style.selected {
    border: 1.5px solid #777;
}
.style.h1,
.style.h2,
.style.title,
.style.subtitle {
    padding: 0 0 2px 2px;
    font-family: "Noto Sans CJK SC", sans-serif;
    font-weight: 300;
}
.style.h1 {
    font-size: 21px;
    color: #2b6173;
}
.style.h2 {
    font-size: 18px;
    color: #2b6173;
}
.style.title {
    font-size: 24px;
}
.style.subtitle {
    padding-bottom: 1px;
    font-size: 12.5px;
    color: #777;
}
.style.subtle {
    width: 75px;
    font-size: 9.5px;
    font-style: italic;
    color: #555;
}
.scroll {
    width: 10px;
    margin-left: -1px;
}
.scroll span {
    height: 13px;
    display: flex;
    align-items: center;
    justify-content: center;
    border: 1px solid #777;
}
.scroll span:first-child {
    height: 12px;
    border-color: #e3e3e3;
}
.editing {
    width: 59px;
}
.editing .stack {
    margin-top: -6px;
    padding-left: 7px;
}
.editing .caret {
    margin-left: 1px;
}
.editing .caret.far {
    margin-left: 7px;
}
.editing .label,
.addins .label,
.netdisk .label {
    grid-template-columns: 1fr;
    padding-right: 2px;
}
.addins {
    width: 39px;
}
.netdisk {
    width: 45px;
}
.big {
    display: flex;
    flex-direction: column;
    align-items: center;
    padding-right: 2px;
}
.big svg {
    width: 20px;
    height: 20px;
    margin: -2px 0 2px;
}
.collapse {
    width: 8px;
    height: 6px;
    margin: 56px 5px 0 auto;
    fill: none;
    stroke: #555;
}
.assistant {
    position: absolute;
    left: 1246px;
    top: 76px;
    width: 20px;
    height: 34px;
}

/* document area */
.workspace {
    height: 565px;
    flex: none;
    background: linear-gradient(#ddd, #ddd) 7px 0 / 1px 100% no-repeat;
}
.ruler {
    height: 20px;
    display: flex;
    border-bottom: 1px solid #e1e1e1;
    padding-left: 443px;
}
.ruler svg {
    fill: #fff;
    stroke: #888;
    z-index: 1;
}
.indent-left {
    width: 10px;
    height: 20px;
    margin-right: -5px;
}
.numbers {
    width: 368px;
    height: 16px;
    margin-top: 2px;
    padding-left: 9px;
    display: flex;
    background: #fff;
    font-family: "Liberation Sans", sans-serif;
    font-size: 6.5px;
    line-height: 15px;
    color: #444;
}
.numbers span {
    width: 18.64px;
    flex: none;
    text-align: center;
}
.indent-right {
    width: 10px;
    height: 8px;
    margin: 9px 0 0 -5px;
}
.canvas {
    display: flex;
    padding-top: 12px;
}
.strip {
    width: 3px;
    height: 469px;
    margin: 64px 364px 0 0;
    background: #fafafa;
}
.page {
    width: 530px;
    height: 533px;
    border: 1px solid #d9d9d9;
    border-bottom: 0;
    background: #fff;
    display: flex;
    justify-content: space-between;
    padding: 47px 63px 0 64px;
}
.crop {
    width: 16px;
    height: 16px;
    border-bottom: 1px solid #aaa;
}
.crop.left {
    border-right: 1px solid #aaa;
}
.crop.right {
    border-left: 1px solid #aaa;
}

/* status bar */
.statusbar {
    height: 15px;
    flex: none;
    background: #f7f7f7;
    display: grid;
    grid-template-columns: 34px 28px 71px 67px 27px 31px 36px 81px 50px 21px 585px 44px 19px 26px 30px 92px 26px;
    margin-left: -3px;
    padding-bottom: 2px;
    align-items: center;
    font-size: 8px;
}
.statusbar > span {
    display: flex;
    align-items: center;
    gap: 2px;
}
.statusbar .pages {
    word-spacing: 1.3px;
}
.statusbar svg {
    width: 10px;
    height: 10px;
    fill: none;
    stroke: #555;
}
.statusbar .view-on {
    height: 15px;
    justify-content: center;
    background: #e4e4e4;
}
.view-on + span {
    padding-left: 9px;
}
.statusbar .zoom svg {
    width: 84px;
    height: 12px;
}
.statusbar .zoom + span {
    font-size: 8.5px;
    padding-left: 2px;
}

/* taskbar */
.taskbar {
    height: 20px;
    flex: none;
    background: #1d1d1d;
    display: flex;
    color: #fff;
}
.start {
    width: 13px;
    padding-top: 2px;
}
.start svg {
    width: 16px;
    height: 16px;
}
.apps {
    display: flex;
    width: 894px;
}
.apps div {
    width: 24.7px;
    height: 20px;
    flex: none;
    padding: 2px 0 0 4px;
}
.apps svg {
    width: 16px;
    height: 16px;
}
.apps .open {
    background: linear-gradient(#7aabd9, #7aabd9) center bottom / 19px 2px no-repeat;
}
.apps .current {
    background-color: #424a47;
    background-size: 25px 2px;
}
.tray {
    display: flex;
    padding-top: 2px;
    width: 332px;
}
.tray svg {
    width: 16px;
    height: 16px;
}
.tray .light {
    color: #eee;
}
.tray .line {
    fill: none;
    stroke: #eee;
}
.tray span {
    width: 16px;
    font-size: 9.5px;
    line-height: 16px;
    text-align: center;
}
.tray .sogou {
    margin-left: 3px;
}
.clock {
    font-size: 8.5px;
    line-height: 19px;
}
.viewers {
    position: absolute;
    left: 0;
    top: 696px;
    font-size: 14.8px;
    line-height: 15px;
    color: rgba(150, 150, 150, 0.6);
}
```
